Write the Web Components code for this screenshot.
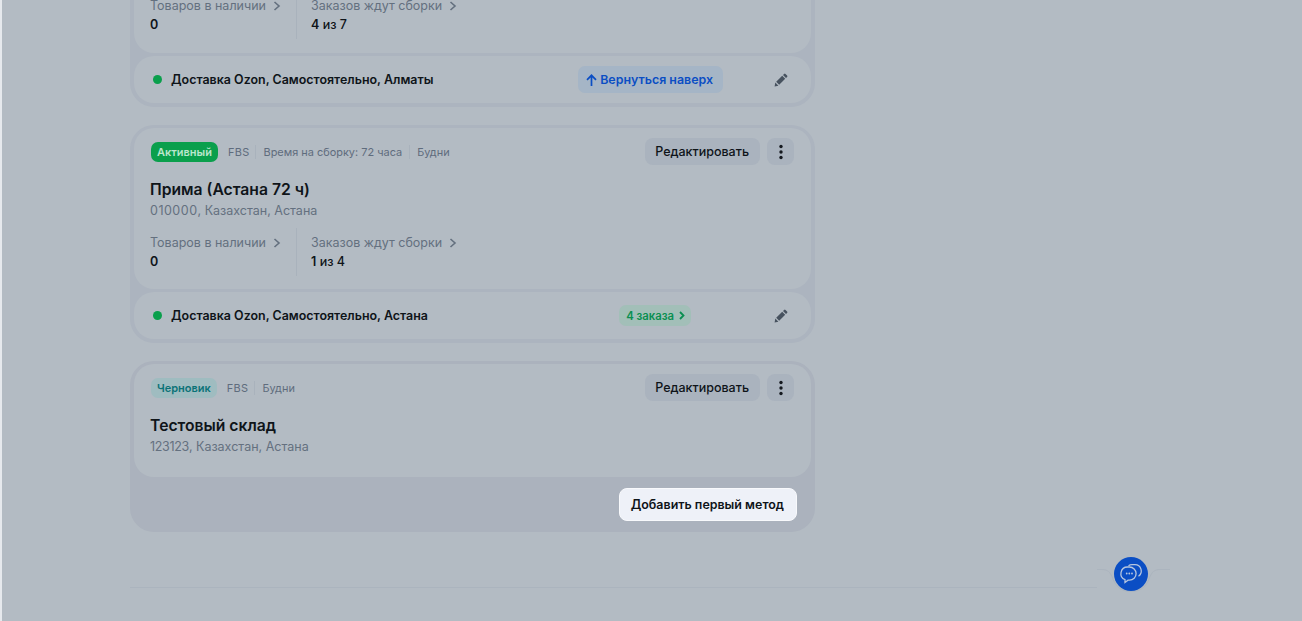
<!DOCTYPE html>
<html lang="ru">
<head>
<meta charset="utf-8">
<title>Склады</title>
<style>
  html, body { margin: 0; height: 100%; overflow: hidden; }
  body { background: #b3bbc3; font-family: Inter, "Noto Sans", sans-serif; color: #0f1419; }
</style>
</head>
<body>
<wh-page>
  <wh-group>
    <wh-card clipped>
      <wh-stats>
        <wh-stat label="Товаров в наличии" value="0"></wh-stat>
        <wh-stat label="Заказов ждут сборки" value="4" rest=" из 7"></wh-stat>
      </wh-stats>
    </wh-card>
    <wh-method name="Доставка Ozon, Самостоятельно, Алматы"><wh-back-top></wh-back-top></wh-method>
  </wh-group>

  <wh-group>
    <wh-card>
      <wh-head status="active" label="Активный">
        <span>FBS</span><span>Время на сборку: 72 часа</span><span>Будни</span>
      </wh-head>
      <wh-title name="Прима (Астана 72 ч)" zip="010000" zip-spacing=".5px" address=", Казахстан, Астана"></wh-title>
      <wh-stats>
        <wh-stat label="Товаров в наличии" value="0"></wh-stat>
        <wh-stat label="Заказов ждут сборки" value="1" rest=" из 4"></wh-stat>
      </wh-stats>
    </wh-card>
    <wh-method name="Доставка Ozon, Самостоятельно, Астана"><wh-orders>4 заказа</wh-orders></wh-method>
  </wh-group>

  <wh-group draft>
    <wh-card draft>
      <wh-head status="draft" label="Черновик">
        <span>FBS</span><span>Будни</span>
      </wh-head>
      <wh-title name="Тестовый склад" zip="123123" zip-spacing="-.33px" address=", Казахстан, Астана"></wh-title>
    </wh-card>
    <wh-add>Добавить первый метод</wh-add>
  </wh-group>
  <wh-footer></wh-footer>
</wh-page>

<script>
const define = (name, css, html) => {
  customElements.define(name, class extends HTMLElement {
    constructor () {
      super()
      this.shadow = this.attachShadow({ mode: 'open' })
    }

    connectedCallback () {
      const markup = typeof html === 'function' ? html(this) : html
      this.shadow.innerHTML = `<style>${css}</style>${markup}`
    }
  })
}

const pencil = `<svg width="14" height="14" viewBox="0 0 14 14" fill="#47525f"><path d="M0.6 13.4l.7-3.8 3.1 3.1zM2.2 8.8l6-6 3 3-6 6zM9 2l1.1-1.1a1 1 0 0 1 1.4 0l1.6 1.6a1 1 0 0 1 0 1.4L12 5z"/></svg>`

define('wh-page', `
  :host { display: block; padding-left: 2px; height: 621px; box-sizing: border-box; overflow: hidden;
    background: linear-gradient(90deg, #e6e9ed 2px, #b3bbc3 2px); }
  .col { width: 685px; margin-left: 128px; display: flex; flex-direction: column; gap: 18px; }
`, '<div class="col"><slot></slot></div>')

define('wh-group', `
  :host { display: flex; flex-direction: column; gap: 3px; padding: 3px 4px 4px; border-radius: 24px; background: #acb4bf; }
  :host([draft]) { background: #abb2bd; padding-bottom: 0; gap: 0; }
  :host(:first-child) { border-radius: 0 0 24px 24px; padding-top: 0; }
`, '<slot></slot>')

define('wh-card', `
  :host { display: block; padding: 10px 17px 13px 16px; border-radius: 20px; background: #b3bbc3; }
  :host([clipped]) { padding-top: 0; border-radius: 0 0 20px 20px; height: 53px; box-sizing: border-box; overflow: hidden; }
  :host([draft]) { padding-bottom: 22px; }
`, '<slot></slot>')

define('wh-head', `
  :host { display: flex; align-items: center; height: 27px; font-size: 10.95px; color: #5f6c7d; }
  .badge { height: 20px; padding: 0 6px; margin-left: 1px; border-radius: 7px; display: flex; align-items: center; font-weight: 600; font-size: 11px; margin-right: 10px; }
  .active { background: #0a9f4c; color: #b9e6cb; }
  .draft { background: #9fbcc0; color: #0b7377; }
  .meta { display: flex; align-items: center; flex: 1; }
  ::slotted(span) { padding: 0 7px; border-left: 1px solid #a9b2bc; line-height: 14px; }
  ::slotted(span:first-child) { border-left: 0; padding: 0 6px 0 0; letter-spacing: .3px; }
  .edit { height: 27px; padding: 0 11px 0 10px; border-radius: 8px; background: #aab3be; color: #0f1419; font-size: 12.5px; font-weight: 500; display: flex; align-items: center; }
  .more { width: 27px; height: 27px; margin-left: 7px; border-radius: 8px; background: #aab3be; display: flex; align-items: center; justify-content: center; }
`, el => `
  <span class="badge ${el.getAttribute('status')}">${el.getAttribute('label')}</span>
  <div class="meta"><slot></slot></div>
  <span class="edit">Редактировать</span>
  <span class="more"><svg width="4" height="16" viewBox="0 0 4 16" fill="#15191f"><circle cx="2" cy="2.5" r="1.7"/><circle cx="2" cy="8" r="1.7"/><circle cx="2" cy="13.5" r="1.7"/></svg></span>
`)

define('wh-title', `
  :host { display: block; margin-top: 15px; }
  h3 { margin: 0; font-size: 15.7px; line-height: 20px; font-weight: 600; color: #0f1419; }
  p { margin: 2px 0 0; font-size: 12.5px; line-height: 17px; color: #64707f; }
`, el => `<h3>${el.getAttribute('name')}</h3><p><span style="letter-spacing:${el.getAttribute('zip-spacing')}">${el.getAttribute('zip')}</span>${el.getAttribute('address')}</p>`)

define('wh-stats', `
  :host { display: flex; margin-top: 9px; }
  :host-context([clipped]) { margin-top: -9px; }
`, '<slot></slot>')

define('wh-stat', `
  :host { display: block; width: 146px; height: 48px; padding-top: 6px; box-sizing: border-box; white-space: nowrap; }
  :host(:last-child) { width: auto; border-left: 1px solid #a9b2bc; padding-left: 14px; }
  .label { display: flex; align-items: center; gap: 7px; font-size: 12.5px; line-height: 18px; color: #64707f; }
  .value { margin-top: 1px; font-size: 12.5px; line-height: 17px; font-weight: 600; color: #0f1419; }
  .rest { font-weight: 500; white-space: pre; }
`, el => `
  <div class="label">${el.getAttribute('label')}<svg width="8" height="10" viewBox="0 0 8 10" fill="none" stroke="#64707f" stroke-width="1.6"><path d="M1.5 1l4.5 4-4.5 4"/></svg></div>
  <div class="value">${el.getAttribute('value')}<span class="rest">${el.getAttribute('rest') || ''}</span></div>
`)

define('wh-method', `
  :host { display: flex; align-items: center; height: 47px; padding: 0 23px 0 19px; border-radius: 20px; background: #b3bbc3; font-size: 12.45px; font-weight: 600; color: #0f1419; }
  .dot { width: 9px; height: 9px; border-radius: 50%; background: #0a9f4c; margin-right: 9px; }
  .name { flex: 1; }
  .slot { display: flex; margin-right: 51px; }
  .pen { display: flex; }
`, el => `
  <span class="dot"></span><span class="name">${el.getAttribute('name')}</span>
  <span class="slot"><slot></slot></span>
  <span class="pen">${pencil}</span>
`)

define('wh-back-top', `
  :host { display: flex; align-items: center; gap: 3px; height: 27px; padding: 0 10px 0 8px; border-radius: 7px; background: #a5b5c6; color: #0b4ec4; font-size: 12.4px; font-weight: 600; }
`, `<svg width="11" height="12" viewBox="0 0 11 12" fill="none" stroke="#0b4ec4" stroke-width="1.7"><path d="M5.5 12V1.5M1 5.8l4.5-4.5 4.5 4.5"/></svg>Вернуться наверх`)

define('wh-orders', `
  :host { display: flex; align-items: center; gap: 5px; height: 21px; padding: 0 6px 0 7px; margin-right: 32px; border-radius: 7px; background: #a2bfb8; color: #0a8f51; font-size: 11.3px; font-weight: 600; }
`, `<slot></slot><svg width="6" height="9" viewBox="0 0 6 9" fill="none" stroke="#0a8f51" stroke-width="1.8"><path d="M1 1l3.5 3.5L1 8"/></svg>`)

define('wh-add', `
  :host { display: flex; justify-content: flex-end; padding: 11px 14px 11px 0; }
  span { display: flex; align-items: center; height: 31px; padding: 0 12px 0 11px; border: 1px solid #f8f9fc; border-radius: 8px; background: #eef1f8; color: #0f1419; font-size: 12.45px; font-weight: 600; }
`, '<span><slot></slot></span>')

define('wh-footer', `
  :host { display: block; position: relative; height: 60px; margin-top: -10px; }
  svg { position: absolute; left: -130px; top: 0; }
`, `
  <svg width="1302" height="80" viewBox="0 0 1302 80" fill="none">
    <path d="M130 47.5H1097" stroke="#abb4be"/>
    <path d="M1097 29.5h5c6 0 8 3 10 7 3 9 8 15 19 15s16-6 19-15c2-4 4-7 10-7h10" stroke="#abb4be"/>
    <circle cx="1131" cy="34" r="17" fill="#0b4ec4"/>
    <g fill="none" stroke="#b7c6df" stroke-width="1.3">
      <path d="M1127.5 27h2a6.5 6.5 0 0 1 0 13.2h-1.5l-3 2.3v-2.8a6.6 6.6 0 0 1 2.5-12.7z"/>
      <path d="M1128.5 25.7c1-.7 2-1 3.5-1h3a6.3 6.3 0 0 1 3.5 11.5"/>
    </g>
    <g fill="#b7c6df"><circle cx="1126.7" cy="33.5" r=".9"/><circle cx="1129.3" cy="33.5" r=".9"/><circle cx="1132" cy="33.5" r=".9"/></g>
  </svg>
`)
</script>
</body>
</html>
